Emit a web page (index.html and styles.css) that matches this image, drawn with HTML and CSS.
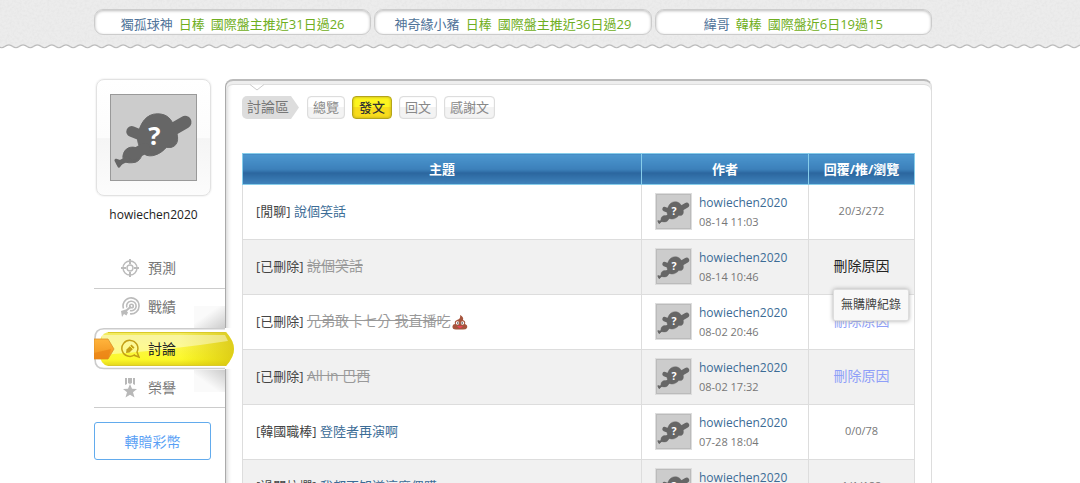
FILE: index.html
```html
<!DOCTYPE html>
<html lang="zh-Hant">
<head>
  <meta charset="UTF-8" />
  <title>討論區 | howiechen2020</title>
  <link rel="stylesheet" href="styles.css">
</head>
<body>
  <!-- shared shapes -->
  <svg class="defs" width="0" height="0" aria-hidden="true">
    <symbol id="avatar" viewBox="0 0 86 86">
      <rect width="86" height="86" fill="#ccc"/>
      <g fill="#666" stroke="#666" stroke-linecap="round" stroke-linejoin="round">
        <path d="M57 38 L75 27.500" stroke-width="13"/>
        <path d="M21 37 L36 43" stroke-width="11"/>
        <path d="M27 42 C29 28 36 19 47 19 C57 19 62 25 64 33 C69 41 69 51 61 53 L56 53 C50 60 40 64 34 60 C30 55 26 49 27 42Z" stroke-width="1"/>
        <path d="M12 62 C13 53 21 51 27 54 C33 57 32 65 25 68 C20 69 16 69 13 67Z" stroke-width="1"/>
        <path d="M34 54 L23 60" stroke-width="11"/>
        <path d="M16 65 L8 69" stroke-width="5"/>
        <path d="M5 66 L8 72 L11 68Z" stroke-width="3"/>
      </g>
      <text x="44" y="51" class="avatar-mark">?</text>
    </symbol>
  </svg>

  <header class="topbar">
    <svg class="topbar-texture" aria-hidden="true">
      <filter id="grain"><feTurbulence type="fractalNoise" baseFrequency="0.4" numOctaves="2"/><feColorMatrix values="0 0 0 0 0.5  0 0 0 0 0.5  0 0 0 0 0.5  1.2 0 0 0 -0.45"/></filter>
      <rect width="100%" height="100%" filter="url(#grain)"/>
    </svg>
    <ul class="news wrap">
      <li><a href="#" class="news-user">獨孤球神</a><a href="#">日棒</a><a href="#">國際盤主推近31日過26</a></li>
      <li><a href="#" class="news-user">神奇緣小豬</a><a href="#">日棒</a><a href="#">國際盤主推近36日過29</a></li>
      <li><a href="#" class="news-user">緯哥</a><a href="#">韓棒</a><a href="#">國際盤近6日19過15</a></li>
    </ul>
    <svg class="topbar-edge" aria-hidden="true">
      <defs>
        <pattern id="wave" x="-5.5" width="14.3" height="6" patternUnits="userSpaceOnUse">
          <path d="M0 0 V.5 Q2 .5 4 2.500 Q7.100 5 10.300 2.500 Q12.300 .5 14.300 .5 V0Z" fill="#ececec"/>
          <path d="M0 .8 Q2 .8 4 2.500 Q7.100 5 10.300 2.500 Q12.300 .8 14.300 .8" fill="none" stroke="#b8b8b8" stroke-width="1.200"/>
        </pattern>
      </defs>
      <rect width="100%" height="6" fill="url(#wave)"/>
    </svg>
  </header>

  <div class="page wrap">
    <aside class="sidebar">
      <div class="profile-pic">
        <svg role="img" aria-label="howiechen2020"><use href="#avatar"/></svg>
      </div>
      <p class="profile-name">howiechen2020</p>

      <nav class="side-nav">
        <a href="#">
          <svg viewBox="0 0 20 20" class="nav-icon" fill="none" stroke="#bbb" stroke-width="1.4">
            <circle cx="10" cy="10" r="7"/><circle cx="10" cy="10" r="3"/>
            <path d="M10 1v5M10 14v5M1 10h5M14 10h5" stroke-width="2"/>
          </svg>
          預測
        </a>
        <a href="#" class="before-active">
          <svg viewBox="0 0 20 20" class="nav-icon" fill="none" stroke="#bbb" stroke-width="1.6">
            <path d="M3.500 11.500A8 8 0 1 1 10 16.800"/>
            <path d="M6.800 10.500A4.800 4.800 0 1 1 10 13.600"/>
            <circle cx="11.500" cy="9" r="1.800"/>
            <path d="M11 9.500 L4 15.500" stroke-width="2"/>
            <path d="M1 14 L5.500 12.500 L8 15.500 L6.500 18.500 L4 17 L2 20Z" fill="#bbb" stroke="none"/>
          </svg>
          戰績
        </a>
        <a href="#" class="active">
          <svg class="active-bg" viewBox="0 0 140 42" aria-hidden="true">
            <defs>
              <linearGradient id="gold" x2="0" y2="1"><stop offset="0" stop-color="#f1ea62"/><stop offset=".4" stop-color="#fbf54a"/><stop offset=".8" stop-color="#fcf92a"/><stop offset="1" stop-color="#e3d51b"/></linearGradient>
              <linearGradient id="gold-right"><stop offset=".6" stop-color="#d9c800" stop-opacity="0"/><stop offset="1" stop-color="#d6c310" stop-opacity=".8"/></linearGradient>
              <linearGradient id="orange" x2="0" y2="1"><stop offset="0" stop-color="#ffb43c"/><stop offset="1" stop-color="#f0901c"/></linearGradient>
            </defs>
            <path d="M140 0 H10 Q0.700 0.700 0.700 10 V32 Q0.700 41 10 41 H140Z" fill="#fff"/>
            <path d="M131 .8 H10 Q1 1 1 10 V31 Q1 40.500 10 40.500 H131" fill="none" stroke="#ccc" stroke-width="1.600"/>
            <path d="M14 4 H132 Q140 13 140 21 Q140 29 132 38 H14 Q6 36 6 27 V15 Q6 6 14 4Z" fill="url(#gold)"/>
            <path d="M14 4 H132 Q140 13 140 21 Q140 29 132 38 H14 Q6 36 6 27 V15 Q6 6 14 4Z" fill="url(#gold-right)"/>
            <path d="M8 7 H131 L134 13 Q76 22 8 27Z" fill="#fff" opacity=".42"/>
            <path d="M14 4.500 H131 M14 37.500 H131" stroke="#d9c92a"/>
            <path d="M0 11 H14 L20 21 L14 31 H0Z" fill="url(#orange)" stroke="#d9902a" stroke-width=".8"/>
            <path d="M0 25 L17 21 L14 31 H0Z" fill="#e98112" opacity=".65"/>
          </svg>
          <svg viewBox="0 0 20 20" class="nav-icon" fill="none" stroke="#c39f16" stroke-width="1.500">
            <path d="M15 15.500A8 8 0 1 1 17 13L19 18L14 16.300"/>
            <path d="M6 14 L6.500 10.500 L11.500 5.500 L14.500 8.500 L9.500 13.500Z" fill="#c39f16" stroke="none"/>
            <path d="M10 7 L13 10" stroke="#f9ef56" stroke-width="1"/>
          </svg>
          <span>討論</span>
        </a>
        <a href="#" class="after-active">
          <svg viewBox="0 0 20 20" class="nav-icon" fill="#b8b8b8">
            <path d="M5 0h2v6l-2 1zM13 0h2v7l-2-1zM8 0h4v5l-2 1-2-1z"/>
            <path d="M10 6l2 4.700 5 .3-4 3.300 1.500 5.200L10 16.700 5.500 19.500 7 14.300 3 11l5-.3z"/>
          </svg>
          榮譽
        </a>
      </nav>

      <button type="button" class="gift-btn">轉贈彩幣</button>
    </aside>

    <main class="panel">
      <svg class="panel-notch" viewBox="0 0 18 8" aria-hidden="true">
        <path d="M2 .5 L9 6 L16 .5" fill="#fff" stroke="#ccc"/>
      </svg>

      <nav class="tabs">
        <h1>討論區</h1>
        <a href="#">總覽</a>
        <a href="#" class="current">發文</a>
        <a href="#">回文</a>
        <a href="#">感謝文</a>
      </nav>

      <table class="posts">
        <thead>
          <tr><th class="col-topic">主題</th><th class="col-author">作者</th><th class="col-count">回覆/推/瀏覽</th></tr>
        </thead>
        <tbody>
          <tr>
            <td>[閒聊] <a href="#">說個笑話</a></td>
            <td>
              <div class="author">
                <svg aria-hidden="true"><use href="#avatar"/></svg>
                <div><a href="#">howiechen2020</a><time>08-14 11:03</time></div>
              </div>
            </td>
            <td class="count">20/3/272</td>
          </tr>
          <tr>
            <td>[已刪除] <del>說個笑話</del></td>
            <td>
              <div class="author">
                <svg aria-hidden="true"><use href="#avatar"/></svg>
                <div><a href="#">howiechen2020</a><time>08-14 10:46</time></div>
              </div>
            </td>
            <td class="count">
              <div class="reason-box">
                <a href="#" class="reason open" aria-describedby="reason-tip">刪除原因</a>
                <div class="tip" id="reason-tip" role="tooltip">無購牌紀錄</div>
              </div>
            </td>
          </tr>
          <tr>
            <td>[已刪除] <del>兄弟敢卡七分 我直播吃<svg class="poop" viewBox="0 0 18 16" role="img" aria-label="poop">
                <path d="M9 1 Q13 3 12 6 Q15 7 14 10 Q17 11 16 14 Q15 15.500 12 15.500 H5 Q1 15.500 1.500 12 Q2 10 4 10 Q3 7 6 6 Q10 5 9 1Z" fill="#a6553d"/>
                <circle cx="6.500" cy="9" r="1.700" fill="#fff"/><circle cx="11.500" cy="9" r="1.700" fill="#fff"/>
                <circle cx="6.800" cy="9" r=".8" fill="#333"/><circle cx="11.200" cy="9" r=".8" fill="#333"/>
                <path d="M6 12 H12 Q9 16 6 12Z" fill="#ec4257"/>
              </svg></del></td>
            <td>
              <div class="author">
                <svg aria-hidden="true"><use href="#avatar"/></svg>
                <div><a href="#">howiechen2020</a><time>08-02 20:46</time></div>
              </div>
            </td>
            <td class="count"><a href="#" class="reason">刪除原因</a></td>
          </tr>
          <tr>
            <td>[已刪除] <del>All in 巴西</del></td>
            <td>
              <div class="author">
                <svg aria-hidden="true"><use href="#avatar"/></svg>
                <div><a href="#">howiechen2020</a><time>08-02 17:32</time></div>
              </div>
            </td>
            <td class="count"><a href="#" class="reason">刪除原因</a></td>
          </tr>
          <tr>
            <td>[韓國職棒] <a href="#">登陸者再演啊</a></td>
            <td>
              <div class="author">
                <svg aria-hidden="true"><use href="#avatar"/></svg>
                <div><a href="#">howiechen2020</a><time>07-28 18:04</time></div>
              </div>
            </td>
            <td class="count">0/0/78</td>
          </tr>
          <tr>
            <td>[過關抗欄] <a href="#">我都不知道這麼偶購</a></td>
            <td>
              <div class="author">
                <svg aria-hidden="true"><use href="#avatar"/></svg>
                <div><a href="#">howiechen2020</a><time>07-28 17:20</time></div>
              </div>
            </td>
            <td class="count">1/1/188</td>
          </tr>
        </tbody>
      </table>
    </main>
  </div>
</body>
</html>
```

FILE: styles.css
```css
* {
  box-sizing: border-box;
}

body {
  margin: 0;
  background: #fff;
  color: #444;
  font-family: "Open Sans", "Noto Sans CJK TC", sans-serif;
  font-size: 13px;
  line-height: 20px;
}

a {
  color: #3b6c96;
  text-decoration: none;
}

.defs {
  position: absolute;
}

.wrap {
  max-width: 892px;
  margin: 0 auto;
  padding-right: 54px;
}

/* top news bar */
.topbar {
  position: relative;
  height: 44px;
  padding-top: 9px;
  background: #ececec;
}

.topbar-texture {
  position: absolute;
  top: 0;
  left: 0;
  width: 100%;
  height: 100%;
  opacity: 0.2;
}

.topbar-edge {
  position: absolute;
  top: 100%;
  left: 0;
  width: 100%;
  height: 6px;
}

.news {
  position: relative;
  display: flex;
  gap: 3px;
  list-style: none;
  padding-left: 0;
}

.news li {
  flex: 1;
  display: flex;
  justify-content: center;
  gap: 6px;
  height: 26px;
  padding-top: 4px;
  border: 1px solid #ccc;
  border-radius: 9px;
  background: #fff;
  box-shadow: inset 0 1px 3px #bbb;
}

.news a {
  color: #6fae21;
}

.news .news-user {
  color: #4f7399;
}

/* layout */
.page {
  display: flex;
  margin-top: 35px;
}

.sidebar {
  width: 131px;
}

.panel {
  flex: 1;
  position: relative;
  min-width: 0;
  padding: 12px 16px 40px;
  border: 1px solid #ddd;
  border-top: 2px solid #bbb;
  border-left: 1px solid #aaa;
  border-radius: 8px;
  box-shadow: inset 0 3px 0 #eee, inset 0 4px 0 #ddd, inset 4px 0 5px -3px #ccc;
}

.panel-notch {
  position: absolute;
  top: 3px;
  left: 22px;
  width: 18px;
  height: 8px;
}

/* profile */
.profile-pic {
  width: 115px;
  margin-left: 2px;
  padding: 14px 13px;
  border: 1px solid #e2e2e2;
  border-radius: 8px;
  background: linear-gradient(#fff 0%, #fcfcfc 50%, #f5f5f5 51%, #fcfcfc 100%);
  box-shadow: 0 0 2px #ddd;
}

.profile-pic svg {
  display: block;
  width: 87px;
  height: 87px;
  border: 1px solid #999;
}

.avatar-mark {
  font: bold 26px "Open Sans", sans-serif;
  fill: #fff;
  text-anchor: middle;
}

.profile-name {
  width: 119px;
  margin: 9px 0 23px;
  color: #222;
  font-size: 12px;
  text-align: center;
}

/* side menu */
.side-nav {
  font-size: 14px;
}

.side-nav a {
  display: flex;
  align-items: center;
  gap: 8px;
  height: 41px;
  padding-left: 26px;
  border-bottom: 1px solid #ccc;
  color: #777;
}

.nav-icon {
  width: 20px;
  height: 20px;
}

.side-nav .before-active {
  height: 39px;
  padding-bottom: 3px;
  border-bottom: 0;
  background: linear-gradient(145deg, #fafafa 40%, #ccc) 100% 100% / 31px 22px no-repeat;
}

.side-nav .active {
  position: relative;
  z-index: 1;
  height: 42px;
  border-bottom: 0;
  color: #222;
}

.side-nav .active > * {
  position: relative;
}

.side-nav .active .active-bg {
  position: absolute;
  top: 0;
  left: 0;
  width: 140px;
  height: 42px;
}

.side-nav .after-active {
  height: 38px;
  padding-bottom: 2px;
  background: linear-gradient(35deg, #fafafa 40%, #ccc) 100% 0 / 31px 22px no-repeat;
}

.gift-btn {
  width: 117px;
  height: 38px;
  margin-top: 14px;
  border: 1px solid #62abed;
  border-radius: 3px;
  background: #fff;
  color: #5a9ff5;
  font-family: inherit;
  font-size: 14px;
}

/* tabs */
.tabs {
  display: flex;
  gap: 7px;
  margin: 3px 0 34px;
}

.tabs h1 {
  width: 57px;
  height: 23px;
  margin: 0 1px 0 0;
  padding-left: 5px;
  border-radius: 5px 0 0 5px;
  background: #ddd;
  clip-path: polygon(0 0, 86% 0, 100% 50%, 86% 100%, 0 100%);
  color: #777;
  font-size: 14px;
  font-weight: normal;
  line-height: 22px;
}

.tabs a {
  height: 23px;
  padding: 0 5px;
  border: 1px solid #ddd;
  border-radius: 4px;
  background: linear-gradient(#fff 50%, #f3f3f3 50%);
  box-shadow: inset 0 0 1px #ccc;
  color: #888;
  line-height: 21px;
}

.tabs .current {
  padding: 0 6px;
  border-color: #b5a51b;
  background: linear-gradient(#fdf51f 50%, #f8dc1c 50%);
  box-shadow: inset 0 0 3px #b5a51b;
  color: #333;
  font-weight: 500;
}

/* post list */
.posts {
  width: 100%;
  border-collapse: collapse;
  table-layout: fixed;
}

.posts th {
  height: 31px;
  padding: 0;
  border: 1px solid #87cdea;
  background: linear-gradient(#4c97cf, #3c80ba 50%, #2b669f 62%, #4084bc);
  color: #fff;
}

.col-author {
  width: 167px;
}

.col-count {
  width: 106px;
}

.posts td {
  height: 55px;
  padding: 0 13px 2px;
  border: 1px solid #ddd;
}

.posts tbody tr:nth-child(even) {
  background: #f1f1f1;
}

.posts del {
  color: #999;
  font-size: 14px;
}

.poop {
  width: 18px;
  height: 16px;
  vertical-align: -4px;
}

.author {
  display: flex;
  gap: 7px;
}

.author svg {
  width: 37px;
  height: 37px;
  border: 1px solid #ddd;
  outline: 1px solid #bbb;
  outline-offset: -2px;
}

.author a {
  display: block;
  font-size: 12px;
}

.author time {
  display: block;
  color: #777;
  font-size: 11px;
  line-height: 17px;
}

.posts .count {
  padding: 0 0 2px;
  color: #777;
  font-size: 11px;
  text-align: center;
}

.reason {
  color: #8f9ff8;
  font-size: 14px;
}

.reason.open {
  color: #222;
}

.reason-box {
  position: relative;
}

.tip {
  position: absolute;
  top: 33px;
  left: 24px;
  z-index: 2;
  padding: 5px 7px;
  border: 1px solid #ddd;
  border-radius: 2px;
  background: #f8f8f8;
  box-shadow: 0 0 4px #aaa;
  color: #444;
  font-size: 12px;
  white-space: nowrap;
}
```
